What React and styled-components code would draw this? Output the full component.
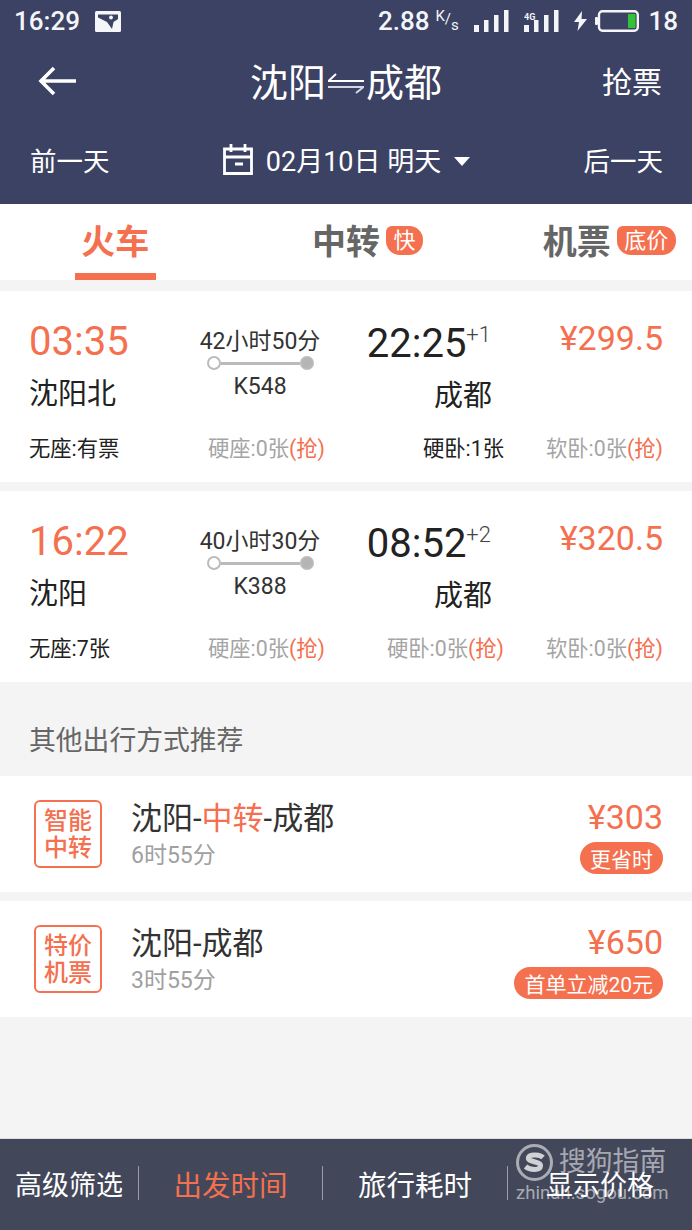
import React from "react";
import styled, { createGlobalStyle } from "styled-components";

const ORANGE = "#f4704f";
const HEADER = "#3c4263";

const GlobalStyle = createGlobalStyle`
  html, body {
    margin: 0;
    padding: 0;
    background: #f4f4f4;
    font-family: Roboto, "Noto Sans CJK SC", sans-serif;
  }
  * {
    box-sizing: border-box;
  }
`;

const Page = styled.div`
  width: 692px;
  height: 1230px;
  display: flex;
  flex-direction: column;
  overflow: hidden;
  background: #f4f4f4;
`;

const Header = styled.header`
  height: 204px;
  background: ${HEADER};
  color: #fff;
  display: flex;
  flex-direction: column;
`;

const StatusBar = styled.div`
  height: 42px;
  padding: 0 14px;
  display: flex;
  align-items: center;
  justify-content: space-between;
  font-size: 26px;
  font-weight: 500;
  color: #f4f5f8;
`;

const StatusGroup = styled.div`
  display: flex;
  align-items: center;
  gap: ${(p) => p.$gap}px;
`;

const Speed = styled.span`
  display: flex;
  align-items: baseline;
  gap: 6px;
`;

// the K sits high and the s low, with a slash between them
const SpeedUnit = styled.span`
  display: flex;
  align-items: flex-start;
  width: 24px;
  height: 24px;
  font-size: 15px;
  font-weight: 400;
  line-height: 16px;
  align-self: center;
`;

const UnitPart = styled.span`
  position: relative;
  top: ${(p) => p.$top}px;
`;

const TitleRow = styled.div`
  height: 78px;
  padding: 0 30px;
  display: grid;
  grid-template-columns: 1fr auto 1fr;
  align-items: center;
`;

const BackButton = styled.span`
  display: flex;
  margin-left: 8px;
`;

const Title = styled.h1`
  margin: 0;
  padding-top: 4px;
  display: flex;
  align-items: center;
  gap: 1px;
  font-size: 38px;
  font-weight: 400;
  line-height: 48px;
`;

const TitleAction = styled.span`
  justify-self: end;
  font-size: 30px;
  padding-bottom: 3px;
`;

const DateRow = styled.div`
  flex: 1;
  padding: 0 29px 6px 30px;
  display: flex;
  align-items: center;
  justify-content: space-between;
  font-size: 26.5px;
`;

const DatePicker = styled.div`
  display: flex;
  align-items: center;
  gap: 13px;
  font-size: 27px;
`;

const Caret = styled.span`
  width: 0;
  height: 0;
  position: relative;
  top: 2px;
  border-left: 8px solid transparent;
  border-right: 8px solid transparent;
  border-top: 9px solid #fff;
`;

const Tabs = styled.nav`
  height: 76px;
  background: #fff;
  display: grid;
  grid-template-columns: repeat(3, 1fr);
`;

const Tab = styled.div`
  position: relative;
  display: flex;
  justify-content: center;
  padding-top: 15px;
`;

const TabLabel = styled.span`
  position: relative;
  height: 44px;
  font-size: 34px;
  line-height: 46px;
  font-weight: 700;
  color: ${(p) => (p.$active ? ORANGE : "#666")};
`;

const TabTag = styled.span`
  position: absolute;
  left: calc(100% + 6px);
  top: 7px;
  height: 29px;
  padding: 0 7.5px;
  display: flex;
  align-items: center;
  font-size: 22px;
  font-weight: 400;
  white-space: nowrap;
  color: #fff;
  background: ${ORANGE};
  border-radius: 6px 14px 14px 14px;
`;

const TabBar = styled.span`
  position: absolute;
  left: 75px;
  bottom: 0;
  width: 81px;
  height: 7px;
  background: ${ORANGE};
`;

const Trains = styled.section`
  margin-top: 11px;
  display: flex;
  flex-direction: column;
  gap: 9px;
`;

const TrainCard = styled.article`
  height: 191px;
  padding: 28px 29px 18px;
  background: #fff;
  display: grid;
  grid-template-columns: 150px 162px 163px 159px;
  grid-template-rows: 115px 30px;
  color: #222;
`;

const Stop = styled.div`
  display: flex;
  flex-direction: column;
  align-items: ${(p) => (p.$end ? "flex-end" : "flex-start")};
`;

const DepartTime = styled.div`
  font-size: 40px;
  line-height: 44px;
  padding-top: 1px;
  color: ${ORANGE};
`;

const ArriveTime = styled.div`
  position: relative;
  left: -13px;
  top: 3px;
  font-size: 40px;
  line-height: 44px;
  font-weight: 400;
`;

const DayOffset = styled.sup`
  font-size: 22px;
  font-weight: 300;
  line-height: 0;
  vertical-align: 15px;
  color: #444;
`;

const StationName = styled.div`
  margin-top: ${(p) => p.$top}px;
  font-size: 29px;
  line-height: 40px;
  padding-right: ${(p) => p.$inset || 0}px;
`;

const Middle = styled.div`
  display: flex;
  flex-direction: column;
  align-items: center;
  padding-top: 9px;
  color: #333;
  font-size: 23px;
  line-height: 28px;
`;

const Route = styled.div`
  width: 107px;
  height: 14px;
  margin: 0 0 3px;
  display: flex;
  align-items: center;
`;

const RouteDot = styled.span`
  flex: none;
  width: 14px;
  height: 14px;
  border-radius: 50%;
  border: 2px solid #bbb;
  background: ${(p) => (p.$filled ? "#b5b5b5" : "#fff")};
`;

const RouteLine = styled.span`
  flex: 1;
  height: 3px;
  background: #bbb;
`;

const Price = styled.div`
  justify-self: end;
  font-size: 34px;
  line-height: 38px;
  margin-top: 0;
  color: ${ORANGE};
`;

const Seat = styled.div`
  align-self: center;
  font-size: 21.3px;
  line-height: 30px;
  white-space: nowrap;
  color: ${(p) => (p.$soldOut ? "#a5a5a5" : "#222")};
  justify-self: ${(p) => p.$align};
  padding-left: ${(p) => p.$inset || 0}px;
`;

const Grab = styled.span`
  color: ${ORANGE};
`;

const SectionTitle = styled.h2`
  margin: 0;
  height: 94px;
  padding: 18px 29px 0;
  display: flex;
  align-items: center;
  font-size: 26.8px;
  font-weight: 400;
  color: #666;
`;

const Suggestions = styled.section`
  display: flex;
  flex-direction: column;
  gap: 9px;
`;

const SuggestionRow = styled.article`
  height: 116px;
  padding: 0 29px 0 34px;
  background: #fff;
  display: flex;
  align-items: center;
`;

const Stamp = styled.div`
  flex: none;
  width: 68px;
  height: 68px;
  margin-right: 29px;
  padding-top: 1px;
  border: 2px solid ${ORANGE};
  border-radius: 6px;
  color: ${ORANGE};
  font-size: 24px;
  line-height: 27px;
  font-weight: 500;
  text-align: center;
  display: flex;
  flex-direction: column;
  justify-content: center;
`;

const SuggestionInfo = styled.div`
  flex: 1;
  margin-top: 2px;
`;

const SuggestionTitle = styled.div`
  font-size: 31px;
  line-height: 42px;
  color: #333;
`;

const Highlight = styled.span`
  color: ${ORANGE};
`;

const SuggestionTime = styled.div`
  font-size: 23px;
  line-height: 32px;
  color: #a0a0a0;
`;

const SuggestionPrice = styled.div`
  display: flex;
  flex-direction: column;
  align-items: flex-end;
  gap: 5px;
  margin-top: 2px;
`;

const PriceText = styled.div`
  font-size: 34px;
  line-height: 40px;
  color: ${ORANGE};
`;

const Pill = styled.span`
  height: 32px;
  padding: 0 10px;
  display: flex;
  align-items: center;
  border-radius: 16px;
  font-size: 21px;
  color: #fff;
  background: ${ORANGE};
`;

const Footer = styled.footer`
  position: relative;
  margin-top: auto;
  height: 92px;
  padding-bottom: 3px;
  display: grid;
  grid-template-columns: 138px 184px 185px 185px;
  align-items: center;
  background: #43475a;
  border-top: 1px solid #ddd;
`;

const SortItem = styled.div`
  height: 34px;
  display: flex;
  align-items: center;
  justify-content: center;
  font-size: ${(p) => p.$size}px;
  color: ${(p) => (p.$active ? ORANGE : "#fff")};
  border-left: ${(p) => (p.$first ? "none" : "1px solid #9a9ca8")};
`;

const Watermark = styled.div`
  position: absolute;
  left: 516px;
  top: 4px;
  width: 154px;
  color: rgba(255, 255, 255, 0.55);
  pointer-events: none;
`;

const WatermarkTop = styled.div`
  display: flex;
  align-items: center;
  gap: 6px;
  font-size: 26.8px;
  line-height: 38px;
`;

const WatermarkUrl = styled.div`
  font-size: 18.6px;
  line-height: 24px;
  white-space: nowrap;
`;

const PictureIcon = () => (
  <svg width="26" height="21" viewBox="0 0 26 21">
    <rect width="26" height="21" rx="1.5" fill="#f5f6f8" />
    <path d="M3 3.5H23V8L18.500 11L17 18L12 11L3 6.500z" fill={HEADER} />
    <circle cx="16" cy="6.500" r="1.900" fill="#f5f6f8" />
  </svg>
);

const SignalIcon = ({ label }) => (
  <svg width="35" height="24" viewBox="0 0 35 24">
    <rect x="0" y="16" width="5" height="7" fill="#f4f5f8" />
    <rect x="10" y="11" width="4.500" height="12" fill="#f4f5f8" />
    <rect x="20" y="6" width="4.500" height="17" fill="#f4f5f8" />
    <rect x="30" y="1" width="4.500" height="22" fill="#f4f5f8" />
    {label && (
      <text x="0" y="11" fontSize="9" fontWeight="700" fill="#f4f5f8" fontFamily="Roboto, sans-serif">
        {label}
      </text>
    )}
  </svg>
);

const BoltIcon = () => (
  <svg width="13" height="20" viewBox="0 0 13 20">
    <path d="M8 0L0 11h5l-1.500 9L13 8H7.500z" fill="#f4f5f8" />
  </svg>
);

const BatteryIcon = () => (
  <svg width="44" height="22" viewBox="0 0 44 22">
    <rect x="0" y="7" width="3" height="8" rx="1" fill="#f4f5f8" />
    <rect x="4" y="1.200" width="38.800" height="19.600" rx="3.500" fill="none" stroke="#f4f5f8" strokeWidth="2.400" />
    <rect x="33" y="4" width="7.500" height="14" fill="#34c13a" />
  </svg>
);

const BackIcon = () => (
  <svg width="40" height="30" viewBox="0 0 40 30">
    <path d="M38 15H3M16 2L3 15l13 13" fill="none" stroke="#fff" strokeWidth="3.600" />
  </svg>
);

const SwapIcon = () => (
  <svg width="38" height="22" viewBox="0 0 38 22">
    <path d="M1 9h36M1.500 9L9 2" fill="none" stroke="#fff" strokeWidth="2" />
    <path d="M1 15h36M36.500 15L29 21" fill="none" stroke="#d5d8e4" strokeWidth="2" />
  </svg>
);

const CalendarIcon = () => (
  <svg width="30" height="31" viewBox="0 0 30 31">
    <path d="M1.500 5h27v24.500h-27zM1.500 13h27M8 0v8M22 0v8M12 20h8" fill="none" stroke="#fff" strokeWidth="2.800" />
  </svg>
);

const SwooshIcon = () => (
  <svg width="37" height="37" viewBox="0 0 37 37">
    <circle cx="18.500" cy="18.500" r="17" fill="none" stroke="rgba(255,255,255,.55)" strokeWidth="3" />
    <path
      d="M27 13.500c-2.500-2.500-13-4-14.500 0-1.500 5 12.500 3.500 12 8.500-.5 5-11 4-15 .5"
      fill="none"
      stroke="rgba(255,255,255,.75)"
      strokeWidth="5"
    />
  </svg>
);

const trains = [
  {
    depart: "03:35",
    from: "沈阳北",
    duration: "42小时50分",
    code: "K548",
    arrive: "22:25",
    offset: "+1",
    price: "¥299.5",
    seats: ["无座:有票", "硬座:0张", "硬卧:1张", "软卧:0张"],
    grab: [false, true, false, true],
  },
  {
    depart: "16:22",
    from: "沈阳",
    duration: "40小时30分",
    code: "K388",
    arrive: "08:52",
    offset: "+2",
    price: "¥320.5",
    seats: ["无座:7张", "硬座:0张", "硬卧:0张", "软卧:0张"],
    grab: [false, true, true, true],
  },
];

const suggestions = [
  {
    stamp: ["智能", "中转"],
    title: (
      <>
        沈阳-<Highlight>中转</Highlight>-成都
      </>
    ),
    time: "6时55分",
    price: "¥303",
    pill: "更省时",
  },
  {
    stamp: ["特价", "机票"],
    title: "沈阳-成都",
    time: "3时55分",
    price: "¥650",
    pill: "首单立减20元",
  },
];

const sorts = [
  { label: "高级筛选", size: 27 },
  { label: "出发时间", size: 28.5, active: true },
  { label: "旅行耗时", size: 28.5 },
  { label: "显示价格", size: 27 },
];

export default function App() {
  return (
    <Page>
      <GlobalStyle />
      <Header>
        <StatusBar>
          <StatusGroup $gap={15}>
            <span>16:29</span>
            <PictureIcon />
          </StatusGroup>
          <StatusGroup $gap={15}>
            <Speed>
              2.88
              <SpeedUnit>
                <UnitPart $top={-1}>K</UnitPart>
                <UnitPart $top={2}>/</UnitPart>
                <UnitPart $top={8}>s</UnitPart>
              </SpeedUnit>
            </Speed>
            <SignalIcon />
            <SignalIcon label="4G" />
            <StatusGroup $gap={8}>
              <BoltIcon />
              <StatusGroup $gap={9}>
                <BatteryIcon />
                <span>18</span>
              </StatusGroup>
            </StatusGroup>
          </StatusGroup>
        </StatusBar>
        <TitleRow>
          <BackButton>
            <BackIcon />
          </BackButton>
          <Title>
            沈阳
            <SwapIcon />
            成都
          </Title>
          <TitleAction>抢票</TitleAction>
        </TitleRow>
        <DateRow>
          <span>前一天</span>
          <DatePicker>
            <CalendarIcon />
            <span>02月10日 明天</span>
            <Caret />
          </DatePicker>
          <span>后一天</span>
        </DateRow>
      </Header>

      <Tabs>
        <Tab>
          <TabLabel $active>火车</TabLabel>
          <TabBar />
        </Tab>
        <Tab>
          <TabLabel>
            中转
            <TabTag>快</TabTag>
          </TabLabel>
        </Tab>
        <Tab>
          <TabLabel>
            机票
            <TabTag>底价</TabTag>
          </TabLabel>
        </Tab>
      </Tabs>

      <Trains>
        {trains.map((t) => (
          <TrainCard key={t.code}>
            <Stop>
              <DepartTime>{t.depart}</DepartTime>
              <StationName $top={10}>{t.from}</StationName>
            </Stop>
            <Middle>
              <span>{t.duration}</span>
              <Route>
                <RouteDot />
                <RouteLine />
                <RouteDot $filled />
              </Route>
              <span>{t.code}</span>
            </Middle>
            <Stop $end>
              <ArriveTime>
                {t.arrive}
                <DayOffset>{t.offset}</DayOffset>
              </ArriveTime>
              <StationName $top={13} $inset={12}>
                成都
              </StationName>
            </Stop>
            <Price>{t.price}</Price>
            {t.seats.map((seat, i) => (
              <Seat
                key={seat}
                $soldOut={t.grab[i]}
                $align={i >= 2 ? "end" : "start"}
                $inset={i === 1 ? 29 : 0}
              >
                {seat}
                {t.grab[i] && <Grab>(抢)</Grab>}
              </Seat>
            ))}
          </TrainCard>
        ))}
      </Trains>

      <SectionTitle>其他出行方式推荐</SectionTitle>

      <Suggestions>
        {suggestions.map((s) => (
          <SuggestionRow key={s.price}>
            <Stamp>
              <span>{s.stamp[0]}</span>
              <span>{s.stamp[1]}</span>
            </Stamp>
            <SuggestionInfo>
              <SuggestionTitle>{s.title}</SuggestionTitle>
              <SuggestionTime>{s.time}</SuggestionTime>
            </SuggestionInfo>
            <SuggestionPrice>
              <PriceText>{s.price}</PriceText>
              <Pill>{s.pill}</Pill>
            </SuggestionPrice>
          </SuggestionRow>
        ))}
      </Suggestions>

      <Footer>
        {sorts.map((s, i) => (
          <SortItem key={s.label} $first={i === 0} $active={s.active} $size={s.size}>
            {s.label}
          </SortItem>
        ))}
        <Watermark>
          <WatermarkTop>
            <SwooshIcon />
            搜狗指南
          </WatermarkTop>
          <WatermarkUrl>zhinan.sogou.com</WatermarkUrl>
        </Watermark>
      </Footer>
    </Page>
  );
}
